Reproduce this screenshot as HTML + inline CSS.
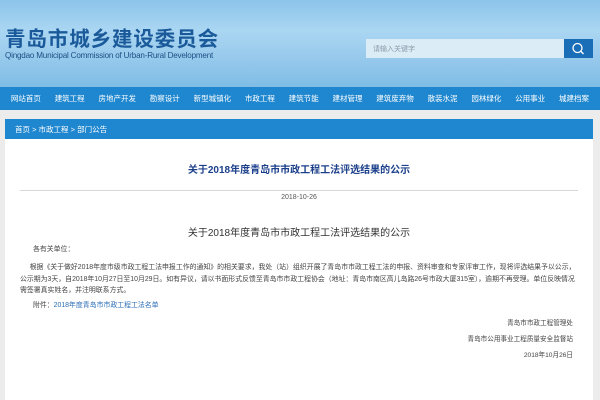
<!DOCTYPE html>
<html><head><meta charset="utf-8"><style>
*{margin:0;padding:0;box-sizing:border-box}
body{width:600px;height:400px;overflow:hidden;background:#ececec;font-family:"Liberation Sans","Noto Sans CJK SC",sans-serif;position:relative}
.hd{position:absolute;left:0;top:0;width:600px;height:87px;background:linear-gradient(180deg,#8cc4ea 0%,#aad6f2 35%,#9ccced 60%,#7fbde6 100%)}
.t1{position:absolute;left:5px;top:25px;font-size:20.5px;line-height:24px;font-weight:bold;color:#1b5a9a;letter-spacing:0.9px;font-family:"Noto Sans CJK SC",sans-serif}
.t2{position:absolute;left:5px;top:51px;font-size:8.1px;line-height:9px;color:#1b4f85;letter-spacing:-0.2px}
.srch{position:absolute;left:366px;top:39px;width:198px;height:19px;background:#dcecf7;font-size:7px;color:#8a9aa8;padding:5px 0 0 7px}
.sb{position:absolute;left:564px;top:39px;width:29px;height:19px;background:#1a6db7}
.nav{position:absolute;left:0;top:87px;width:600px;height:23px;background:#1f87cf;color:#fff;font-size:7.5px;display:flex;justify-content:space-around;align-items:center;padding:0 4px}
.box{position:absolute;left:5px;top:119px;width:588px;height:281px;background:#fff}
.bc{height:20px;background:#1f87cf;color:#fff;font-size:7.5px;padding:5px 0 0 10px}
.tt{position:absolute;top:42px;width:100%;text-align:center;font-size:10px;font-weight:bold;color:#1b3f8a}
.ln{position:absolute;left:15px;right:15px;top:71px;border-top:1px solid #d8d8d8}
.dt{position:absolute;top:75px;width:100%;text-align:center;font-size:7px;color:#555}
.st{position:absolute;top:105px;width:100%;text-align:center;font-size:10px;color:#333}
.p{position:absolute;left:15px;font-size:6.9px;color:#444;line-height:11.5px;white-space:nowrap}
.r{position:absolute;right:20px;font-size:6.6px;color:#444}
</style></head><body>
<div class="hd"></div>
<div class="t1">青岛市城乡建设委员会</div>
<div class="t2">Qingdao Municipal Commission of Urban-Rural Development</div>
<div class="srch">请输入关键字</div>
<div class="sb"><svg width="29" height="19"><circle cx="13.5" cy="9" r="4.5" fill="none" stroke="#fff" stroke-width="1.3"/><line x1="16.8" y1="12.3" x2="19.5" y2="15" stroke="#fff" stroke-width="1.4"/></svg></div>
<div class="nav"><span>网站首页</span><span>建筑工程</span><span>房地产开发</span><span>勘察设计</span><span>新型城镇化</span><span>市政工程</span><span>建筑节能</span><span>建材管理</span><span>建筑废弃物</span><span>散装水泥</span><span>园林绿化</span><span>公用事业</span><span>城建档案</span></div>
<div class="box">
<div class="bc">首页 &gt; 市政工程 &gt; 部门公告</div>
<div class="tt">关于2018年度青岛市市政工程工法评选结果的公示</div>
<div class="ln"></div>
<div class="dt">2018-10-26</div>
<div class="st">关于2018年度青岛市市政工程工法评选结果的公示</div>
<div class="p" style="top:125px;left:28px">各有关单位：</div>
<div class="p" style="top:143px">&nbsp;&nbsp;&nbsp;&nbsp;&nbsp;根据《关于做好2018年度市级市政工程工法申报工作的通知》的相关要求，我处（站）组织开展了青岛市市政工程工法的申报、资料审查和专家评审工作，现将评选结果予以公示，<br>公示期为3天，自2018年10月27日至10月29日。如有异议，请以书面形式反馈至青岛市市政工程协会（地址：青岛市南区高儿岛路26号市政大厦315室），逾期不再受理。单位反映情况<br>需签署真实姓名，并注明联系方式。</div>
<div class="p" style="top:181px;left:28px">附件：<span style="color:#2a6db5">2018年度青岛市市政工程工法名单</span></div>
<div class="r" style="top:198px">青岛市市政工程管理处</div>
<div class="r" style="top:214px">青岛市公用事业工程质量安全监督站</div>
<div class="r" style="top:230px">2018年10月26日</div>
</div>
</body></html>
